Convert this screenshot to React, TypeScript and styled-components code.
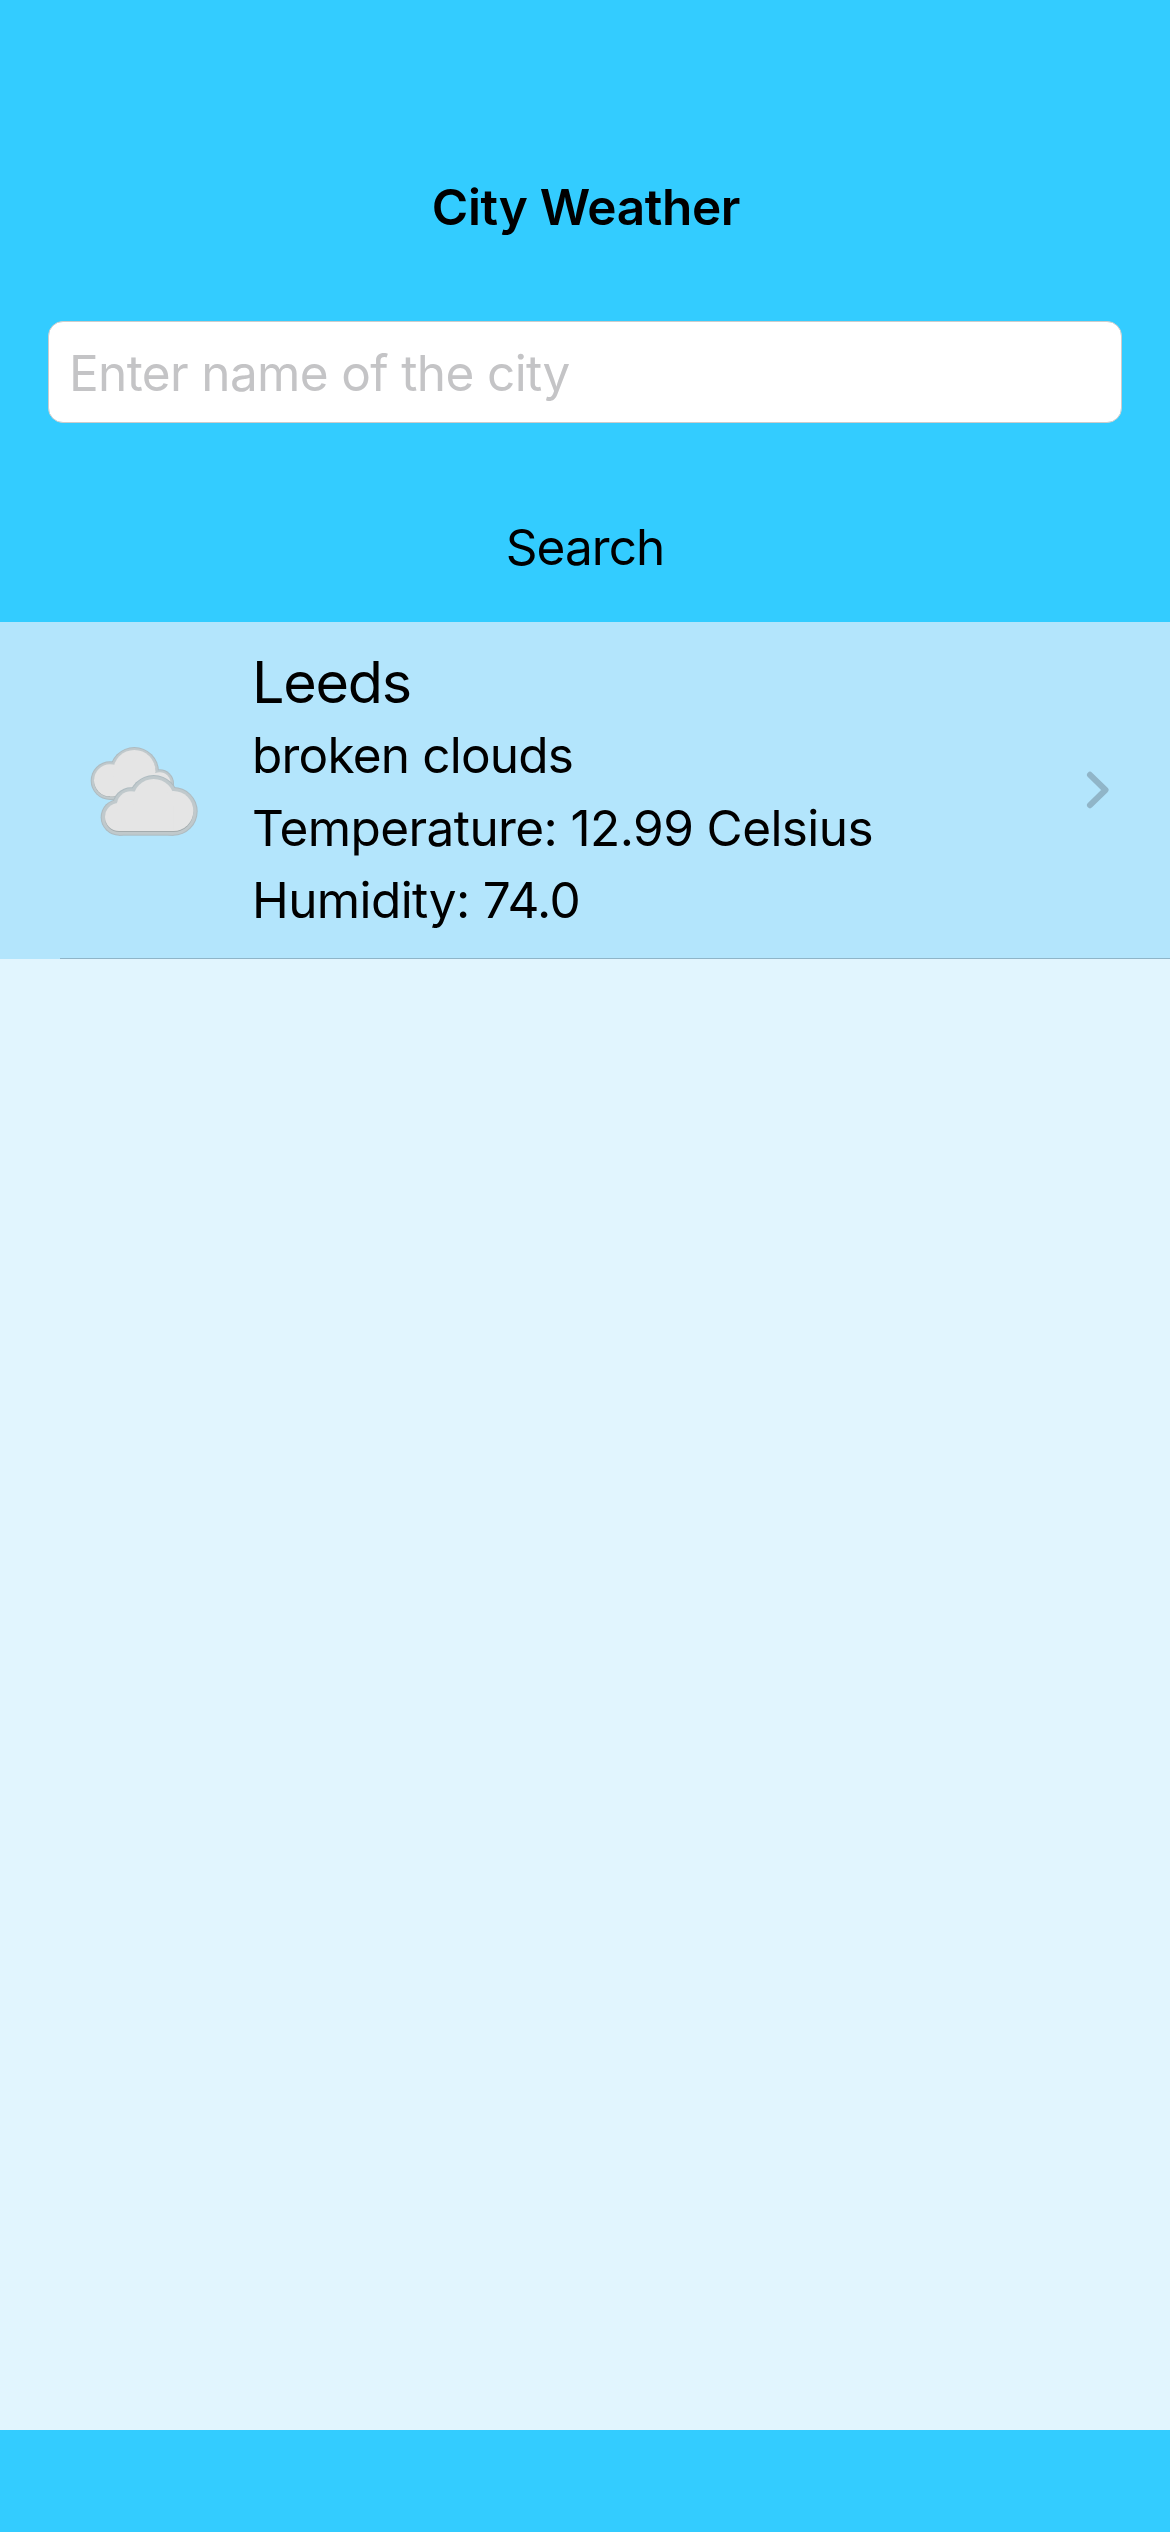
import React from "react";
import styled, { createGlobalStyle } from "styled-components";

const GlobalStyle = createGlobalStyle`
  * { box-sizing: border-box; }
  body {
    margin: 0;
    background: #33ccff;
    color: #000;
    font-family: Inter, "Liberation Sans", sans-serif;
  }
`;

const Screen = styled.div`
  display: flex;
  flex-direction: column;
  width: 1170px;
  height: 2532px;
  background: #33ccff;
  overflow: hidden;
`;

const Header = styled.header`
  display: flex;
  flex-direction: column;
  height: 622px;
  padding: 177px 48px 0;
`;

const Title = styled.h1`
  margin: 0;
  padding-left: 2px;
  font-size: 49.5px;
  font-weight: 600;
  line-height: 60px;
  letter-spacing: -0.354px;
  text-align: center;
`;

const CityInput = styled.input`
  height: 102px;
  margin: 84px 0 0;
  padding: 1px 20px 0;
  border: 1px solid #cccccc;
  border-radius: 15px;
  outline: none;
  background: #fff;
  color: #000;
  font-family: inherit;
  font-size: 49.5px;
  line-height: 60px;
  letter-spacing: -0.638px;

  &::placeholder {
    color: #c4c4c6;
    opacity: 1;
  }
`;

const SearchButton = styled.button`
  align-self: center;
  margin: 94px 0 0;
  padding: 0;
  border: 0;
  background: none;
  color: #000;
  font-family: inherit;
  font-size: 49.5px;
  line-height: 60px;
  letter-spacing: -0.95px;
`;

const Results = styled.main`
  flex: 1;
  background: #e1f5fe;
`;

const Row = styled.article`
  display: flex;
  flex-direction: column;
  height: 337px;
  background: #b3e5fc;
`;

const RowContent = styled.div`
  display: flex;
  flex: 1;
  padding-left: 70px;
  padding-right: 60px;
`;

const IconSlot = styled.div`
  width: 182px;
  padding-top: 98px;
`;

const Details = styled.div`
  flex: 1;
  padding-top: 24px;
`;

const CityName = styled.h2`
  margin: 0 0 1px;
  font-size: 57.5px;
  font-weight: 400;
  line-height: 72px;
  letter-spacing: -1.25px;
`;

const Detail = styled.p<{ $tracking: number }>`
  margin: 0;
  font-size: 49.5px;
  line-height: 72.5px;
  letter-spacing: ${(p) => p.$tracking}px;
  white-space: nowrap;
`;

const ChevronSlot = styled.div`
  padding-top: 148px;
`;

const Divider = styled.div`
  height: 1px;
  margin-left: 60px;
  background: #8fb5c8;
`;

const BottomBar = styled.footer`
  height: 102px;
`;

const Svg = styled.svg`
  display: block;
`;

function BackCloud({ inset }: { inset: number }) {
  return (
    <>
      <circle cx="120" cy="182" r={58 - inset} />
      <circle cx="193" cy="155" r={74 - inset} />
      <circle cx="269" cy="191" r={43 - inset} />
      <rect x="120" y="170" width="150" height={70 - inset} />
    </>
  );
}

function FrontCloud({ inset }: { inset: number }) {
  return (
    <>
      <circle cx="147" cy="292" r={55 - inset} />
      <circle cx="183" cy="258" r={56 - inset} />
      <circle cx="251" cy="240" r={75 - inset} />
      <circle cx="310" cy="274" r={73 - inset} />
      <rect x="147" y="260" width="163" height={87 - inset} />
    </>
  );
}

function BrokenCloudsIcon() {
  return (
    <Svg width="150" height="140" viewBox="0 0 450 420" aria-hidden="true">
      <g fill="#aebbc0"><BackCloud inset={0} /></g>
      <g fill="#c0c9cc"><BackCloud inset={3} /></g>
      <g fill="#a3abad" transform="translate(0 1)"><BackCloud inset={10} /></g>
      <g fill="#e5e5e5" transform="translate(0 -1)"><BackCloud inset={10} /></g>
      <g fill="#aebbc0"><FrontCloud inset={0} /></g>
      <g fill="#c0c9cc"><FrontCloud inset={3} /></g>
      <g fill="#a3abad" transform="translate(0 2)"><FrontCloud inset={13} /></g>
      <g fill="#e5e5e5" transform="translate(0 -1)"><FrontCloud inset={13} /></g>
    </Svg>
  );
}

function Chevron() {
  return (
    <Svg width="26" height="40" viewBox="0 0 26 40" fill="none" aria-hidden="true">
      <path
        d="M6 4.8 21.5 20 6 35.2"
        stroke="#90b5c8"
        strokeWidth="6"
        strokeLinecap="round"
        strokeLinejoin="round"
      />
    </Svg>
  );
}

const details = [
  { text: "broken clouds", tracking: -0.8 },
  { text: "Temperature: 12.99 Celsius", tracking: -0.59 },
  { text: "Humidity: 74.0", tracking: -0.6 },
];

export default function App() {
  return (
    <>
      <GlobalStyle />
      <Screen>
        <Header>
          <Title>City Weather</Title>
          <CityInput placeholder="Enter name of the city" />
          <SearchButton type="button">Search</SearchButton>
        </Header>
        <Results>
          <Row>
            <RowContent>
              <IconSlot>
                <BrokenCloudsIcon />
              </IconSlot>
              <Details>
                <CityName>Leeds</CityName>
                {details.map((d) => (
                  <Detail key={d.text} $tracking={d.tracking}>
                    {d.text}
                  </Detail>
                ))}
              </Details>
              <ChevronSlot>
                <Chevron />
              </ChevronSlot>
            </RowContent>
            <Divider />
          </Row>
        </Results>
        <BottomBar />
      </Screen>
    </>
  );
}
